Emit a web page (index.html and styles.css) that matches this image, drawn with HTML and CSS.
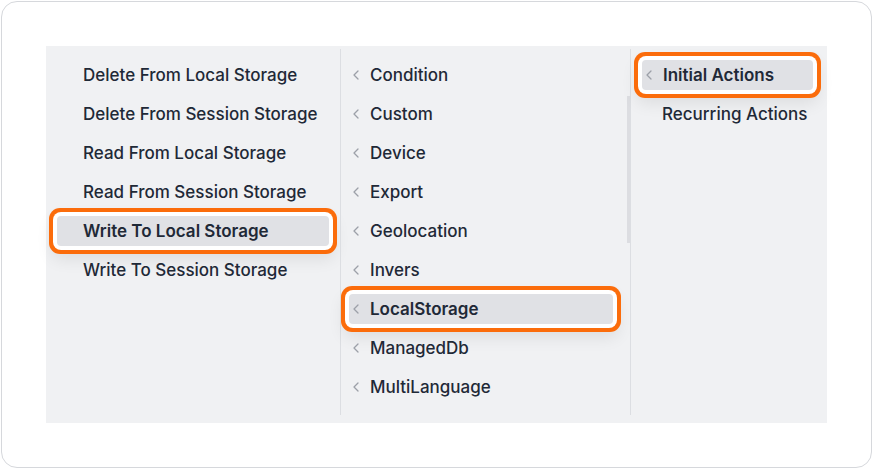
FILE: index.html
```html
<!DOCTYPE html>
<html>
<head>
<meta charset="utf-8">
<link rel="stylesheet" href="styles.css">
</head>
<body>
<div class="card">
  <div class="panel">
    <div class="col col1">
      <div class="item"><span class="label">Delete From Local Storage</span></div>
      <div class="item"><span class="label">Delete From Session Storage</span></div>
      <div class="item"><span class="label">Read From Local Storage</span></div>
      <div class="item"><span class="label">Read From Session Storage</span></div>
      <div class="item active"><span class="label">Write To Local Storage</span></div>
      <div class="item"><span class="label">Write To Session Storage</span></div>
    </div>
    <div class="col col2">
      <div class="thumb"></div>
      <div class="item"><svg class="chev" viewBox="0 0 6 10"><path d="M5 1 L1 5 L5 9"/></svg><span class="label">Condition</span></div>
      <div class="item"><svg class="chev" viewBox="0 0 6 10"><path d="M5 1 L1 5 L5 9"/></svg><span class="label">Custom</span></div>
      <div class="item"><svg class="chev" viewBox="0 0 6 10"><path d="M5 1 L1 5 L5 9"/></svg><span class="label">Device</span></div>
      <div class="item"><svg class="chev" viewBox="0 0 6 10"><path d="M5 1 L1 5 L5 9"/></svg><span class="label">Export</span></div>
      <div class="item"><svg class="chev" viewBox="0 0 6 10"><path d="M5 1 L1 5 L5 9"/></svg><span class="label">Geolocation</span></div>
      <div class="item"><svg class="chev" viewBox="0 0 6 10"><path d="M5 1 L1 5 L5 9"/></svg><span class="label">Invers</span></div>
      <div class="item active"><svg class="chev" viewBox="0 0 6 10"><path d="M5 1 L1 5 L5 9"/></svg><span class="label">LocalStorage</span></div>
      <div class="item"><svg class="chev" viewBox="0 0 6 10"><path d="M5 1 L1 5 L5 9"/></svg><span class="label">ManagedDb</span></div>
      <div class="item"><svg class="chev" viewBox="0 0 6 10"><path d="M5 1 L1 5 L5 9"/></svg><span class="label">MultiLanguage</span></div>
    </div>
    <div class="col col3">
      <div class="item active"><svg class="chev" viewBox="0 0 6 10"><path d="M5 1 L1 5 L5 9"/></svg><span class="label">Initial Actions</span></div>
      <div class="item"><span class="label">Recurring Actions</span></div>
    </div>
  </div>
</div>
</body>
</html>
```
FILE: styles.css
```css
html, body {
  margin: 0;
  padding: 0;
  background: #ffffff;
}
body {
  font-family: Inter, "Noto Sans", sans-serif;
}
.card {
  margin: 1px;
  width: 871px;
  height: 467px;
  box-sizing: border-box;
  border: 1px solid #d6d8dc;
  border-radius: 16px;
  padding: 44px;
}
.panel {
  display: flex;
  height: 377px;
  background: #f0f1f3;
  box-sizing: border-box;
  padding: 3px 0 8px;
}
.col {
  position: relative;
  box-sizing: border-box;
  padding-top: 11px;
}
.col1 {
  width: 294px;
}
.col2 {
  width: 290px;
  border-left: 1px solid #dcdee2;
}
.col3 {
  flex: 1;
  border-left: 1px solid #dcdee2;
}
.thumb {
  position: absolute;
  right: 0;
  top: 47px;
  width: 3px;
  height: 147px;
  background: #dcdde1;
}
.item {
  display: flex;
  align-items: center;
  height: 30px;
  margin-bottom: 9px;
  border-radius: 4px;
  font-size: 17px;
  font-weight: 500;
  color: #1f2937;
  white-space: nowrap;
}
.col1 .item {
  margin-left: 11px;
  margin-right: 11px;
  padding-left: 26px;
}
.col2 .item {
  margin-left: 8px;
  margin-right: 17px;
  padding-left: 4px;
}
.col3 .item {
  margin-left: 11px;
  margin-right: 14px;
  padding-left: 20px;
}
.col3 .item.active {
  padding-left: 4px;
}
.chev {
  width: 6px;
  height: 10px;
  margin-right: 11px;
  flex: none;
}
.chev path {
  fill: none;
  stroke: #9ca0a8;
  stroke-width: 1.3;
  stroke-linecap: round;
  stroke-linejoin: round;
}
.item.active {
  background: #e0e1e5;
  font-weight: 600;
  box-shadow: 0 0 0 4px #ffffff, 0 0 0 8px #fb6c0b, 0 8px 16px 6px rgba(0, 0, 0, 0.08);
}
```
